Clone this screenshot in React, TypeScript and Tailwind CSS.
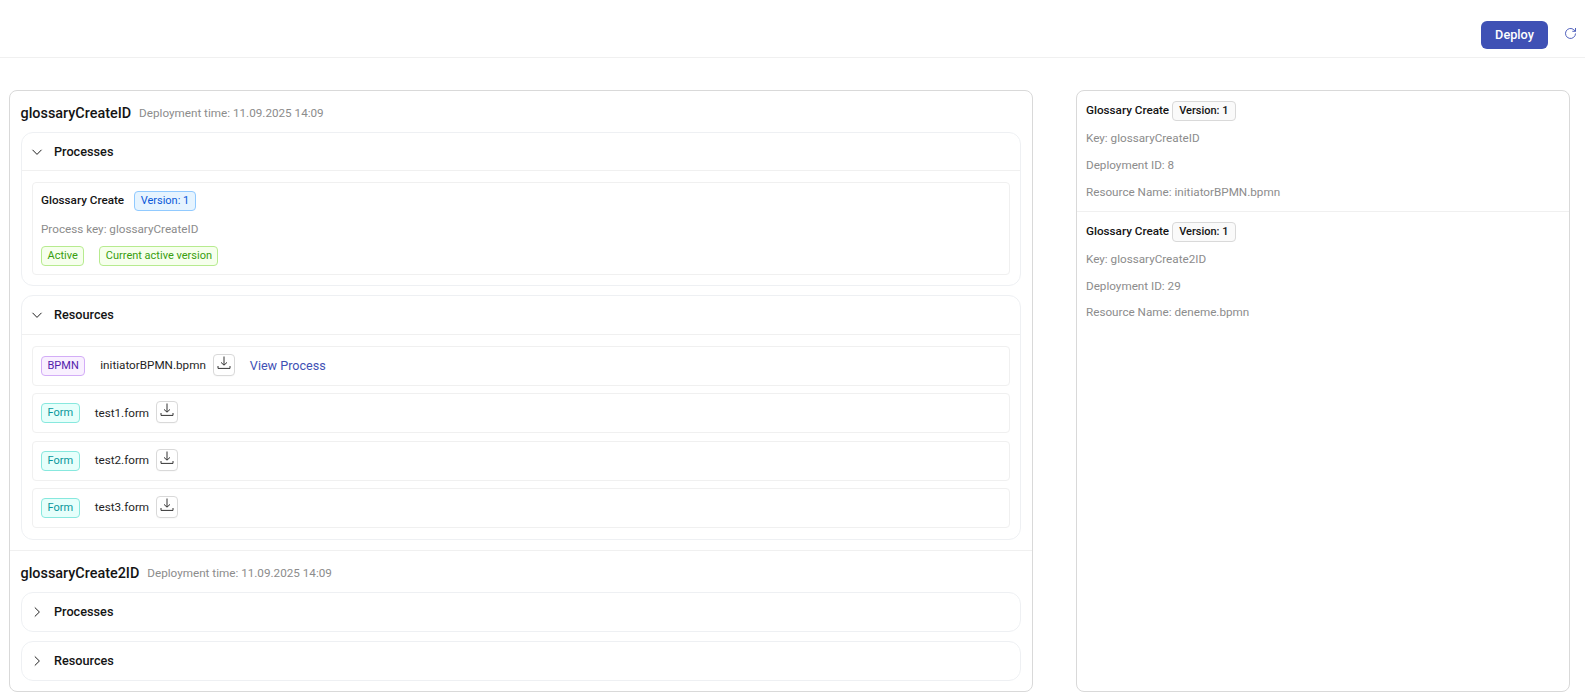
import React from "react";

function ChevronDown() {
  return (
    <svg width="12" height="12" viewBox="0 0 12 12" fill="none" stroke="#1f1f1f" strokeWidth="1">
      <path d="M1.5 3.8 6 8.4l4.500-4.600" />
    </svg>
  );
}

function ChevronRight() {
  return (
    <svg width="12" height="12" viewBox="0 0 12 12" fill="none" stroke="#1f1f1f" strokeWidth="1">
      <path d="M3.800 1.500 8.400 6l-4.600 4.500" />
    </svg>
  );
}

function DownloadButton() {
  return (
    <span className="flex h-[22px] w-[22px] items-start justify-center rounded-[4px] border border-[#d9d9d9] bg-white pt-[1px] shadow-[0_1px_0_rgba(0,0,0,0.02)]">
      <svg width="14" height="14" viewBox="0 0 14 14" fill="none" stroke="#333" strokeWidth="1">
        <path d="M7 0.5v8.5M4 6.4 7 9.2l3-2.8M1 10v2.400h12V10" />
      </svg>
    </span>
  );
}

function Tag({ className, children }: { className: string; children: React.ReactNode }) {
  return (
    <span className={`inline-flex h-5 items-center rounded-[4px] border px-[5.5px] text-[11px] leading-5 ${className}`}>
      {children}
    </span>
  );
}

function ResourceRow({
  tag,
  tagClass,
  gap,
  name,
  view,
}: {
  tag: string;
  tagClass: string;
  gap: string;
  name: string;
  view?: boolean;
}) {
  return (
    <div className="flex h-10 items-center rounded-[4px] border border-[#f0f0f0] px-2">
      <Tag className={tagClass}>{tag}</Tag>
      <span className={`${gap} text-[11.7px] text-[#1f1f1f]`}>{name}</span>
      <span className="ml-[7px] -mt-[2px]">
        <DownloadButton />
      </span>
      {view && <span className="ml-[15px] text-[12.6px] text-[#3f51b5]">View Process</span>}
    </div>
  );
}

function CollapsedPanel({ title, className }: { title: string; className: string }) {
  return (
    <div className={`flex h-10 items-center rounded-[12px] border border-[#eef0f3] pl-[9px] ${className}`}>
      <ChevronRight />
      <span className="ml-[11px] text-[12.7px] font-medium text-[#141414]">{title}</span>
    </div>
  );
}

function DetailBlock({ keyName, id, resource, border, top, stack }: { keyName: string; id: string; resource: string; border?: boolean; top: string; stack: string }) {
  return (
    <div className={`h-[121px] px-[9px] ${top} ${border ? "border-b border-[#f0f0f0]" : ""}`}>
      <div className="flex h-5 items-center">
        <span className="text-[11.7px] font-medium text-[#141414]">Glossary Create</span>
        <span className="ml-[3px] inline-flex h-5 items-center rounded-[4px] border border-[#d9d9d9] bg-[#fafafa] px-[6px] text-[11px] font-medium text-[#141414]">
          Version: 1
        </span>
      </div>
      <div className={`mt-[8px] flex flex-col text-[11.7px] leading-[18px] text-[#8c8c8c] ${stack}`}>
        <div>Key: {keyName}</div>
        <div>Deployment ID: {id}</div>
        <div>Resource Name: {resource}</div>
      </div>
    </div>
  );
}

export default function App() {
  const formTag = "border-[#87e8de] bg-[#e6fffb] text-[#08979c]";
  return (
    <div className="h-[697px] overflow-hidden bg-white font-['Roboto',sans-serif]">
      <header className="flex h-[58px] items-start justify-end border-b border-[#f0f0f0] pt-[21px] pr-[8px]">
        <button className="h-7 w-[67px] rounded-[6px] bg-[#3f51b5] text-[12.7px] font-medium text-white">Deploy</button>
        <span className="ml-[16px] mt-[6px] text-[#3f51b5]">
          <svg width="13" height="13" viewBox="0 0 13 13" fill="none" stroke="currentColor" strokeWidth="0.9">
            <path d="M11.500 6.500a5 5 0 1 1-1.600-3.700l1.600 1.500M11.500 1v3.300H8.300" />
          </svg>
        </span>
      </header>

      <main className="flex items-start gap-[43px] pt-[32px] pl-[9px] pr-[15px]">
        <section className="h-[602px] w-[1024px] shrink-0 overflow-hidden rounded-[8px] border border-[#d9d9d9]">
          <div className="flex h-[41px] items-center pl-[10.5px] pt-[5px]">
            <span className="text-[14.4px] font-medium text-[#141414]">glossaryCreateID</span>
            <span className="ml-2 text-[11.7px] text-[#8c8c8c]">Deployment time: 11.09.2025 14:09</span>
          </div>
          <div className="mx-[11px] h-[154px] rounded-[12px] border border-[#eef0f3]">
            <div className="flex h-[38px] items-center border-b border-[#f0f0f0] pl-[9px]">
              <ChevronDown />
              <span className="ml-[11px] text-[12.7px] font-medium text-[#141414]">Processes</span>
            </div>
            <div className="mx-[10px] mt-[11px] h-[93px] rounded-[4px] border border-[#f0f0f0] px-2 pt-2">
              <div className="flex h-5 items-center">
                <span className="text-[11.7px] font-medium text-[#141414]">Glossary Create</span>
                <Tag className="ml-[10px] border-[#91caff] bg-[#e6f4ff] text-[#0958d9]">Version: 1</Tag>
              </div>
              <div className="mt-[9px] text-[11.7px] leading-[18px] text-[#8c8c8c]">Process key: glossaryCreateID</div>
              <div className="mt-2 flex gap-[15px]">
                <Tag className="border-[#b7eb8f] bg-[#f6ffed] text-[#389e0d]">Active</Tag>
                <Tag className="border-[#b7eb8f] bg-[#f6ffed] text-[#389e0d]">Current active version</Tag>
              </div>
            </div>
          </div>
          <div className="mx-[11px] mt-[9px] h-[245px] rounded-[12px] border border-[#eef0f3]">
            <div className="flex h-[39px] items-center border-b border-[#f0f0f0] pl-[9px]">
              <ChevronDown />
              <span className="ml-[11px] text-[12.7px] font-medium text-[#141414]">Resources</span>
            </div>
            <div className="mx-[10px] mt-[11px] flex flex-col gap-[7.4px]">
              <ResourceRow
                tag="BPMN"
                tagClass="border-[#d3adf7] bg-[#f9f0ff] text-[#531dab]"
                gap="ml-[15px]"
                name="initiatorBPMN.bpmn"
                view
              />
              <ResourceRow tag="Form" tagClass={formTag} gap="ml-[15px]" name="test1.form" />
              <ResourceRow tag="Form" tagClass={formTag} gap="ml-[15px]" name="test2.form" />
              <ResourceRow tag="Form" tagClass={formTag} gap="ml-[15px]" name="test3.form" />
            </div>
          </div>
          <div className="mt-[10px] border-t border-[#f0f0f0]">
            <div className="flex h-[41px] items-center pl-[10.5px] pt-[4px]">
              <span className="text-[14.4px] font-medium text-[#141414]">glossaryCreate2ID</span>
              <span className="ml-2 text-[11.7px] text-[#8c8c8c]">Deployment time: 11.09.2025 14:09</span>
            </div>
            <CollapsedPanel title="Processes" className="mx-[11px]" />
            <CollapsedPanel title="Resources" className="mx-[11px] mt-[9px]" />
          </div>
        </section>

        <aside className="h-[602px] flex-1 overflow-hidden rounded-[8px] border border-[#d9d9d9]">
          <DetailBlock keyName="glossaryCreateID" id="8" resource="initiatorBPMN.bpmn" border top="pt-[10px]" stack="gap-[9px]" />
          <DetailBlock keyName="glossaryCreate2ID" id="29" resource="deneme.bpmn" top="pt-[10px]" stack="gap-[8.500px]" />
        </aside>
      </main>
    </div>
  );
}
